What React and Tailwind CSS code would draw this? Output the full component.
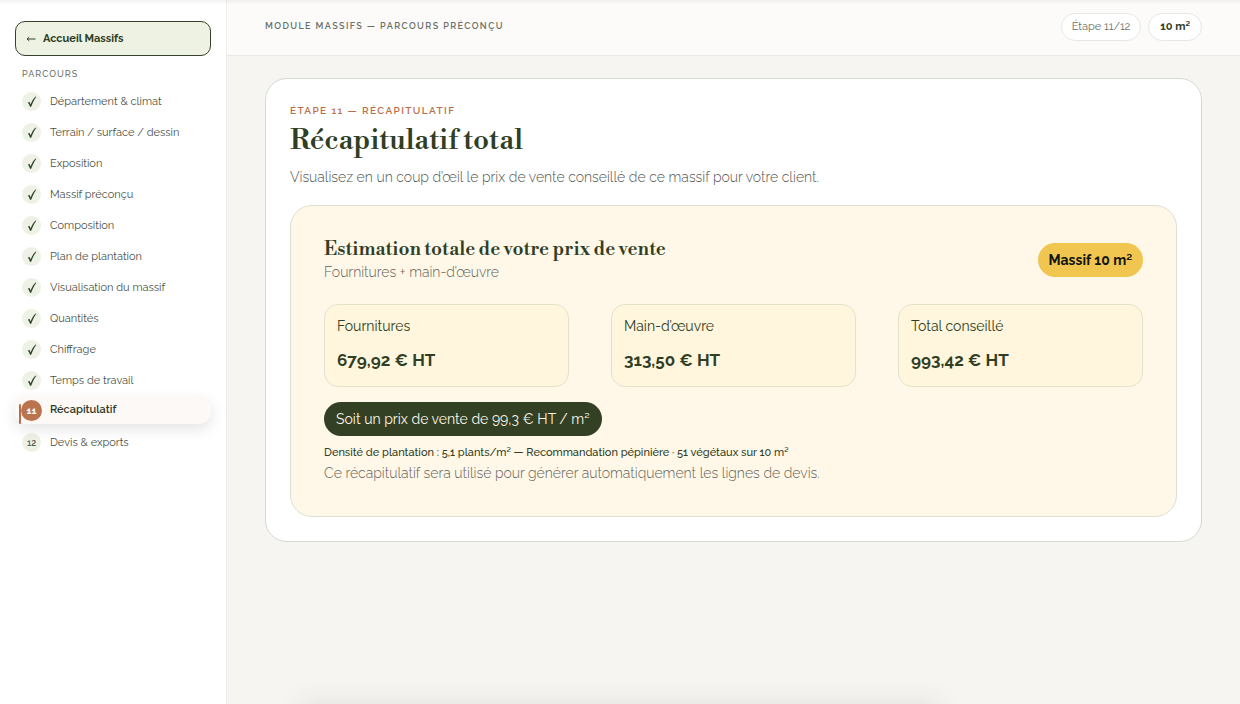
const steps = [
  "Département & climat",
  "Terrain / surface / dessin",
  "Exposition",
  "Massif préconçu",
  "Composition",
  "Plan de plantation",
  "Visualisation du massif",
  "Quantités",
  "Chiffrage",
  "Temps de travail",
  "Récapitulatif",
  "Devis & exports",
];

const current = 11;

const totals = [
  { label: "Fournitures", value: "679,92 € HT" },
  { label: "Main-d’œuvre", value: "313,50 € HT" },
  { label: "Total conseillé", value: "993,42 € HT" },
];

function Check() {
  return (
    <svg viewBox="0 0 10 12" className="h-3 w-2.5" aria-hidden="true">
      <path d="M0.9 6.7 L2.4 5.7 L3.6 8.3 C5 5 6.5 2.6 8.6 0.6 L9.2 0.9 C7.2 3.6 5.6 6.8 4.3 10.6 L3.1 10.9 C2.5 9.2 1.8 7.8 0.9 6.7 Z" fill="#2f4a2b" />
    </svg>
  );
}

function Step({ number, label }) {
  if (number === current) {
    return (
      <li className="flex h-[31px] items-start">
        <a
          href="#"
          aria-current="step"
          className="relative flex h-7 w-full items-center gap-2 rounded-xl bg-[#fdf9f6] pl-[6px] text-[11px] font-semibold text-[#2f3a2b] shadow-[0_5px_14px_rgba(40,50,35,0.13)]"
        >
          <span className="absolute top-2 left-[4px] h-5 w-[2px] rounded-sm bg-[#b96f4a]" />
          <span className="relative flex size-[21px] shrink-0 items-center justify-center rounded-full bg-[#bb734e] text-[10px] font-bold text-white">
            {number}
          </span>
          {label}
        </a>
      </li>
    );
  }
  return (
    <li className="flex h-[31px] items-center">
      <a href="#" className="flex w-full items-center gap-[9px] pl-[7px] text-[11px] leading-[18px] text-[#4a5247]">
        <span className="flex size-[19px] shrink-0 items-center justify-center rounded-full bg-[#eef1e6] text-[9px] font-semibold text-[#596056]">
          {number < current ? <Check /> : number}
        </span>
        {label}
      </a>
    </li>
  );
}

export default function App() {
  return (
    <div className="flex min-h-screen overflow-hidden bg-[#f6f5f1] font-['Raleway','Lato',sans-serif] text-[#2f3e24]">
      <aside className="w-[227px] shrink-0 border-r border-[#eceeec] bg-white pt-[21px] pr-[15px] pl-[15px]">
        <a
          href="#"
          className="flex h-[35px] items-center gap-[7px] rounded-[10px] border border-[#35432a] bg-[#edf2e3] px-[10px] text-[11px] leading-[18px] font-bold"
        >
          <svg viewBox="0 0 10 8" className="h-2 w-2.5" fill="none" stroke="#35432a" aria-hidden="true">
            <path d="M1 4 H9.5 M3.2 2.2 L1 4 L3.2 5.8" />
          </svg>
          Accueil Massifs
        </a>
        <h2 className="mt-[11px] pl-[7px] text-[9px] leading-[14px] font-medium tracking-[1px] text-[#697067]">PARCOURS</h2>
        <nav aria-label="Parcours" className="mt-[5px]">
          <ol>
            {steps.map((label, i) => (
              <Step key={label} number={i + 1} label={label} />
            ))}
          </ol>
        </nav>
      </aside>

      <div className="min-w-0 flex-1">
        <header className="flex h-14 items-center justify-between border-b border-[#e8e9e5] bg-[#fcfbf9] pr-[38px] pb-[2px] pl-[38px]">
          <p className="text-[9px] font-semibold tracking-[1.4px] text-[#697067]">MODULE MASSIFS — PARCOURS PRÉCONÇU</p>
          <div className="flex gap-[7px] text-[11px] leading-[18px]">
            <span className="flex h-7 items-center rounded-full border border-[#e7e8e3] bg-white px-[10px] text-[#697067]">
              Étape 11/12
            </span>
            <span className="flex h-7 items-center rounded-full border border-[#e7e8e3] bg-white px-[11px] font-bold">
              10 m²
            </span>
          </div>
        </header>

        <main className="px-[38px] pt-[22px]">
          <section className="rounded-[22px] border border-[#d3dcd1] bg-white p-6">
            <p className="text-[10px] leading-[16px] font-semibold tracking-[1.4px] text-[#b96f4a]">ÉTAPE 11 — RÉCAPITULATIF</p>
            <h1 className="font-['Libre_Bodoni','Liberation_Serif',serif] text-[28px] leading-[44px] font-medium">Récapitulatif total</h1>
            <p className="mt-[2px] text-[14px] leading-6 font-light text-[#4f554f]">
              Visualisez en un coup d’œil le prix de vente conseillé de ce massif pour votre client.
            </p>

            <div className="mt-4 rounded-[22px] border border-[#dde0d0] bg-[#fff8e9] px-[33px] pt-[29px] pb-8">
              <div className="flex items-center justify-between">
                <div>
                  <h2 className="font-['Libre_Bodoni','Liberation_Serif',serif] text-[19px] leading-[28px] font-semibold">
                    Estimation totale de votre prix de vente
                  </h2>
                  <p className="text-[14px] leading-[18px] font-light text-[#5f6258]">Fournitures + main-d’œuvre</p>
                </div>
                <span className="mt-1 flex h-[34px] items-center rounded-full bg-[#f0c650] px-[11px] text-[14px] font-bold text-[#11140c]">
                  Massif 10 m²
                </span>
              </div>

              <dl className="mt-[23px] grid grid-cols-3 gap-[42px]">
                {totals.map((t) => (
                  <div key={t.label} className="h-[83px] rounded-[14px] border border-[#e2e2cb] bg-[#fff6dd] px-3 pt-[10px]">
                    <dt className="text-[14px] leading-[22px]">{t.label}</dt>
                    <dd className="mt-[10px] text-[17px] leading-[26px] font-bold">{t.value}</dd>
                  </div>
                ))}
              </dl>

              <p className="mt-[15px] flex h-[34px] w-fit items-center rounded-full bg-[#334023] px-3 text-[14px] text-[#fbf6e8]">
                Soit un prix de vente de 99,3 € HT / m²
              </p>
              <p className="mt-2 text-[11px] leading-[18px] font-medium">
                Densité de plantation : 5,1 plants/m² — Recommandation pépinière · 51 végétaux sur 10 m²
              </p>
              <p className="text-[14px] leading-[22px] font-light text-[#5f6258]">
                Ce récapitulatif sera utilisé pour générer automatiquement les lignes de devis.
              </p>
            </div>
          </section>
        </main>
      </div>

      <div className="pointer-events-none fixed inset-x-0 top-0 h-1 bg-linear-to-b from-black/5 to-transparent" />
      <div className="pointer-events-none fixed top-full right-[300px] left-[300px] h-10 shadow-[0_0_28px_rgba(40,40,30,0.10)]" />
    </div>
  );
}
